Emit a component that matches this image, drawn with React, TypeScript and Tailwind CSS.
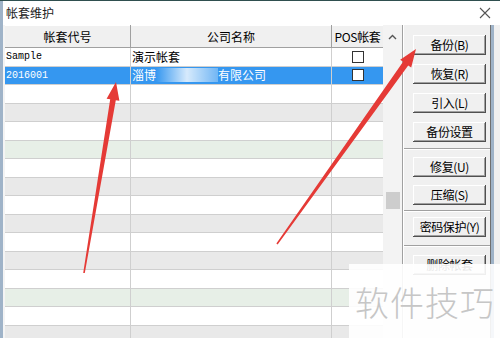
import React from 'react';

const CJK = "font-['Noto_Sans_CJK_SC',sans-serif]";
const MONO = "font-['Liberation_Mono','Noto_Sans_CJK_SC',monospace]";

type Row = { code?: string; name?: React.ReactNode; check?: boolean; tone: 'white' | 'gray' | 'green' | 'sel' };

const rows: Row[] = [
  { code: 'Sample', name: '演示帐套', check: true, tone: 'white' },
  {
    code: '2016001',
    name: (
      <span className="flex items-center">
        淄博
        <span className="inline-block w-[62px] h-[14px] bg-linear-to-r from-transparent via-white/80 to-white/30" />
        有限公司
      </span>
    ),
    check: true,
    tone: 'sel',
  },
  { tone: 'white' },
  { tone: 'gray' },
  { tone: 'white' },
  { tone: 'green' },
  { tone: 'white' },
  { tone: 'gray' },
  { tone: 'white' },
  { tone: 'gray' },
  { tone: 'white' },
  { tone: 'gray' },
  { tone: 'white' },
  { tone: 'green' },
  { tone: 'white' },
  { tone: 'gray' },
];

const toneClass = {
  white: 'bg-white text-black',
  gray: 'bg-[#e9e9e9] text-black',
  green: 'bg-[#e7efe7] text-black',
  sel: 'bg-[#3597f0] text-white',
};

const Btn = ({ label }: { label: string }) => (
  <div className="h-[20px] w-[73px] shrink-0 flex items-center justify-center bg-[#f0f0f0] text-[12px] tracking-[-0.4px] text-black whitespace-nowrap shadow-[inset_-1px_-1px_0_#505050,inset_1px_1px_0_#ffffff,inset_-2px_-2px_0_#a0a0a0]">
    {label}
  </div>
);

const Sep = () => <div className="h-[2px] w-full border-t border-[#a0a0a0] border-b border-b-white" />;

export default function App() {
  return (
    <div className={`relative w-[500px] h-[338px] overflow-hidden bg-[#f0f0f0] ${CJK} border-t border-[#2f4f4f]`}>
      <div className="flex h-full">
        <div className="w-[3px] h-full bg-[#9fb3c8]" />
        <div className="flex-1 flex flex-col">
          {/* title bar */}
          <div className="h-[24px] shrink-0 bg-white flex items-center justify-between pl-[3px] pr-[9px]">
            <span className="text-[12px] text-[#222]">帐套维护</span>
            <svg width="12" height="12" viewBox="0 0 12 12">
              <path d="M1 1 L11 11 M11 1 L1 11" stroke="#555" strokeWidth="1.1" />
            </svg>
          </div>
          <div className="flex flex-1 min-h-0">
            {/* table */}
            <div className="w-[380px] flex flex-col border-l-2 border-[#f4f4f4]">
              <div className="h-[23px] shrink-0 flex bg-[#f0f0f0] text-[12px] text-black shadow-[inset_0_1px_0_#ffffff,inset_0_-1px_0_#a0a0a0]">
                <div className="w-[126px] flex items-center justify-center border-r border-[#a0a0a0]">帐套代号</div>
                <div className="w-[201px] flex items-center justify-center border-r border-[#a0a0a0]">公司名称</div>
                <div className="w-[51px] flex items-center justify-center tracking-[-0.3px]">POS帐套</div>
              </div>
              {rows.map((r, i) => (
                <div key={i} className={`h-[18.5px] shrink-0 flex border-b border-[#cfcfcf] ${toneClass[r.tone]}`}>
                  <div className={`w-[126px] flex items-center pl-[1px] text-[10px] border-r border-[#cfcfcf] ${MONO}`}>{r.code}</div>
                  <div className="w-[201px] flex items-center pl-[1px] text-[12px] border-r border-[#cfcfcf]">{r.name}</div>
                  <div className="w-[51px] flex items-center justify-center">
                    {r.check && <div className="w-[12px] h-[12px] border border-[#333] bg-white" />}
                  </div>
                </div>
              ))}
            </div>
            {/* scrollbar */}
            <div className="w-[19px] bg-[#f3f3f3] flex flex-col items-center">
              <div className="h-[23px] w-full shrink-0 flex items-center justify-center">
                <svg width="9" height="6" viewBox="0 0 9 6">
                  <path d="M1 5 L4.5 1.5 L8 5" stroke="#555" strokeWidth="1.4" fill="none" />
                </svg>
              </div>
              <div className="h-[144px] shrink-0" />
              <div className="w-[14px] h-[17px] shrink-0 bg-[#cdcdcd]" />
            </div>
            {/* button panel */}
            <div className="w-[92px] flex border-l border-[#a0a0a0]">
              <div className="flex-1 flex flex-col border-l border-white border-r border-r-[#707070] pt-[10px]">
                <div className="flex flex-col gap-[9px] pl-[9px]">
                  <Btn label="备份(B)" />
                  <Btn label="恢复(R)" />
                  <Btn label="引入(L)" />
                  <Btn label="备份设置" />
                </div>
                <div className="mt-[6px] mb-[7px]"><Sep /></div>
                <div className="flex flex-col gap-[8px] pl-[9px]">
                  <Btn label="修复(U)" />
                  <Btn label="压缩(S)" />
                </div>
                <div className="mt-[5px] mb-[5px]"><Sep /></div>
                <div className="pl-[9px]"><Btn label="密码保护(Y)" /></div>
                <div className="mt-[8px] mb-[8px]"><Sep /></div>
                <div className="pl-[9px]"><Btn label="删除帐套" /></div>
              </div>
              <div className="w-[3px] bg-[#9fb3c8]" />
            </div>
          </div>
        </div>
      </div>

      {/* annotation arrows */}
      <svg className="absolute inset-0 pointer-events-none" width="500" height="338" viewBox="0 0 500 338">
        <polygon
          fill="#e53a36"
          points="116,81 119.4,99.8 115.8,99.3 84.8,272.1 83.2,271.9 110.2,98.2 106.6,97.7"
        />
        <polygon
          fill="#e53a36"
          points="416,48 411.2,66.6 408.2,64.5 277.65,243.46 276.35,242.54 403.1,60.8 400.2,58.8"
        />
      </svg>

      {/* watermark */}
      <div className="absolute left-[349px] top-[263px] w-[151px] h-[75px] bg-white/90 flex items-center pl-[6px]">
        <span className="text-[34px] tracking-[1px] text-[#c6c6c6] font-light leading-none">软件技巧</span>
      </div>
    </div>
  );
}
